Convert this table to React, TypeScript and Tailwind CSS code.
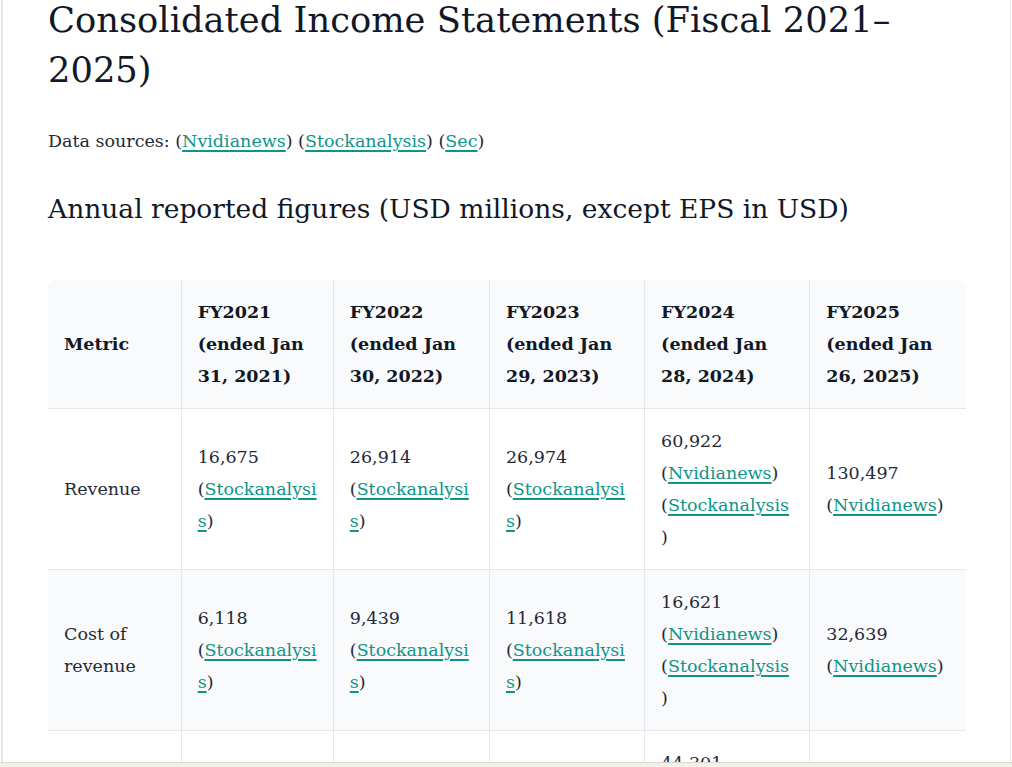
import React from 'react'

type Source = 'Nvidianews' | 'Stockanalysis' | 'Sec'

interface Cell {
  value: string
  sources: Source[]
}

interface Row {
  metric: string
  cells: Cell[]
}

const COLUMNS = [
  { fy: 'FY2021', ended: '(ended Jan 31, 2021)', w: 'w-[152px]' },
  { fy: 'FY2022', ended: '(ended Jan 30, 2022)', w: 'w-[156px]' },
  { fy: 'FY2023', ended: '(ended Jan 29, 2023)', w: 'w-[155px]' },
  { fy: 'FY2024', ended: '(ended Jan 28, 2024)', w: 'w-[165px]' },
  { fy: 'FY2025', ended: '(ended Jan 26, 2025)', w: 'w-[156px]' },
]

const ROWS: Row[] = [
  {
    metric: 'Revenue',
    cells: [
      { value: '16,675', sources: ['Stockanalysis'] },
      { value: '26,914', sources: ['Stockanalysis'] },
      { value: '26,974', sources: ['Stockanalysis'] },
      { value: '60,922', sources: ['Nvidianews', 'Stockanalysis'] },
      { value: '130,497', sources: ['Nvidianews'] },
    ],
  },
  {
    metric: 'Cost of revenue',
    cells: [
      { value: '6,118', sources: ['Stockanalysis'] },
      { value: '9,439', sources: ['Stockanalysis'] },
      { value: '11,618', sources: ['Stockanalysis'] },
      { value: '16,621', sources: ['Nvidianews', 'Stockanalysis'] },
      { value: '32,639', sources: ['Nvidianews'] },
    ],
  },
  {
    metric: 'Gross profit',
    cells: [
      { value: '10,557', sources: ['Stockanalysis'] },
      { value: '17,475', sources: ['Stockanalysis'] },
      { value: '15,356', sources: ['Stockanalysis'] },
      { value: '44,301', sources: ['Nvidianews', 'Stockanalysis'] },
      { value: '97,858', sources: ['Nvidianews'] },
    ],
  },
]

function SourceLink({ name }: { name: Source }) {
  return (
    <>
      (
      <a
        href="#"
        className="text-[#0f9488] underline decoration-2 underline-offset-[3px]"
      >
        {name}
      </a>
      )
    </>
  )
}

export default function App() {
  return (
    <div className="flex flex-col h-screen bg-white font-['DejaVu_Serif',serif] text-[#1f2937]">
      <div className="flex-1 overflow-hidden ml-px mr-px border-l-2 border-r border-[#e8e8e8]">
        <div className="pl-[45px] pr-[44px]">
          <h1 className="-mt-[5px] text-[35.3px] leading-[50px] font-normal text-[#111827]">
            Consolidated Income Statements (Fiscal 2021–2025)
          </h1>

          <p className="mt-[30px] text-[17.5px] leading-[32px]">
            Data sources: <SourceLink name="Nvidianews" /> <SourceLink name="Stockanalysis" />{' '}
            <SourceLink name="Sec" />
          </p>

          <h2 className="mt-[34px] text-[26.5px] leading-[36px] font-normal text-[#111827]">
            Annual reported figures (USD millions, except EPS in USD)
          </h2>

          <div className="mt-[53px] rounded-t-lg overflow-hidden">
            <table className="w-full table-fixed border-collapse text-[17.5px] leading-[32px]">
              <colgroup>
                <col className="w-[133px]" />
                {COLUMNS.map((c) => (
                  <col key={c.fy} className={c.w} />
                ))}
              </colgroup>
              <thead>
                <tr className="bg-[#f9fafb] border-b border-[#e5e7eb]">
                  <th className="px-4 py-4 text-left align-middle font-bold text-[#111827]">Metric</th>
                  {COLUMNS.map((c) => (
                    <th
                      key={c.fy}
                      className="px-4 py-4 text-left align-middle font-bold text-[#111827] border-l border-[#e5e7eb]"
                    >
                      {c.fy} {c.ended}
                    </th>
                  ))}
                </tr>
              </thead>
              <tbody>
                {ROWS.map((row, i) => (
                  <tr
                    key={row.metric}
                    className={`border-b border-[#e5e7eb] ${i % 2 === 1 ? 'bg-[#f9fafb]' : 'bg-white'}`}
                  >
                    <td className="px-4 py-4 align-middle">{row.metric}</td>
                    {row.cells.map((cell, j) => (
                      <td
                        key={j}
                        className="px-4 py-4 align-middle border-l border-[#e5e7eb] [overflow-wrap:anywhere]"
                      >
                        {cell.value}{' '}
                        {cell.sources.map((s, k) => (
                          <React.Fragment key={s}>
                            {k > 0 && ' '}
                            <SourceLink name={s} />
                          </React.Fragment>
                        ))}
                      </td>
                    ))}
                  </tr>
                ))}
              </tbody>
            </table>
          </div>
        </div>
      </div>
      <div className="h-[5px] shrink-0 border-t border-[#dcdad0] bg-[#f1f0ea]" />
    </div>
  )
}
